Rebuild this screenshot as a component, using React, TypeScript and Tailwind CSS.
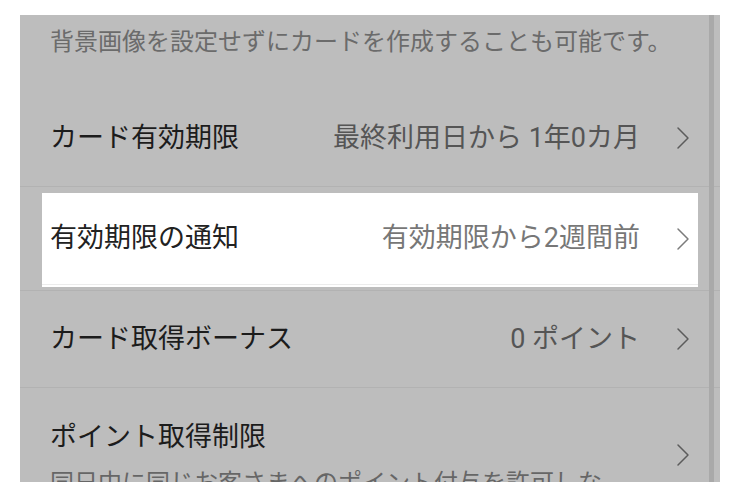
import React from 'react';

const font = { fontFamily: '"Roboto", "Noto Sans CJK JP", "Noto Sans", sans-serif' };

const Chevron: React.FC = () => (
  <svg width="14" height="24" viewBox="0 0 14 24" fill="none" className="shrink-0">
    <path d="M2 2 L12 12 L2 22" stroke="currentColor" strokeWidth="1.5" strokeLinecap="round" strokeLinejoin="round" />
  </svg>
);

interface RowProps {
  title: string;
  value?: string;
}

const SettingRow: React.FC<RowProps> = ({ title, value }) => (
  <div className="h-[97px] border-b border-[#b2b2b2] px-[30px] flex items-center">
    <span className="text-[27px] text-[#1c1c1c] leading-none">{title}</span>
    <span className="ml-auto text-[27px] text-[#555555] leading-none">{value}</span>
    <span className="ml-[36px] text-[#5c5c5c]">
      <Chevron />
    </span>
  </div>
);

export default function App() {
  return (
    <div className="w-[740px] h-[498px] bg-white pt-[15px] px-[20px] pb-[16px]" style={font}>
      <div className="relative h-full bg-[#bdbdbd] overflow-hidden">
        {/* 上の行（スクロールで見切れている） */}
        <p className="-mt-[28px] h-[30px] px-[30px] text-[24px] leading-[30px] text-[#6a6a6a] whitespace-nowrap">
          推奨サイズ 横1080 × 縦640 ピクセル、JPG または PNG 形式
        </p>

        <div className="h-[73px] px-[30px] pt-[8px]">
          <p className="text-[24px] leading-[34px] text-[#6b6b6b] whitespace-nowrap">
            背景画像を設定せずにカードを作成することも可能です。
          </p>
        </div>

        <SettingRow title="カード有効期限" value="最終利用日から 1年0カ月" />

        {/* ハイライトされた行 */}
        <div className="h-[98px] border-b border-[#b2b2b2]">
          <div className="relative z-10 mt-[6px] mx-[22px] h-[94px] bg-white">
            <div className="h-[92px] border-b border-[#ececec] px-[8px] flex items-center">
              <span className="text-[27px] text-[#222222] leading-none">有効期限の通知</span>
              <span className="ml-auto text-[27px] text-[#777777] leading-none">有効期限から2週間前</span>
              <span className="ml-[36px] text-[#7c7c7c]">
                <Chevron />
              </span>
            </div>
          </div>
        </div>

        <SettingRow title="カード取得ボーナス" value="0 ポイント" />

        <div className="px-[30px] pt-[34px] flex items-start">
          <div className="flex-1 min-w-0">
            <p className="text-[27px] leading-[30px] text-[#1c1c1c]">ポイント取得制限</p>
            <p className="mt-[16px] text-[24px] leading-[30px] text-[#666666] whitespace-nowrap">
              同日中に同じお客さまへのポイント付与を許可しな
            </p>
          </div>
          <span className="mt-[21px] ml-[20px] text-[#5c5c5c]">
            <Chevron />
          </span>
        </div>

        {/* スクロールバー */}
        <div className="absolute top-0 right-[6px] w-[5px] h-full bg-[#a9a9a9]" />
      </div>
    </div>
  );
}
